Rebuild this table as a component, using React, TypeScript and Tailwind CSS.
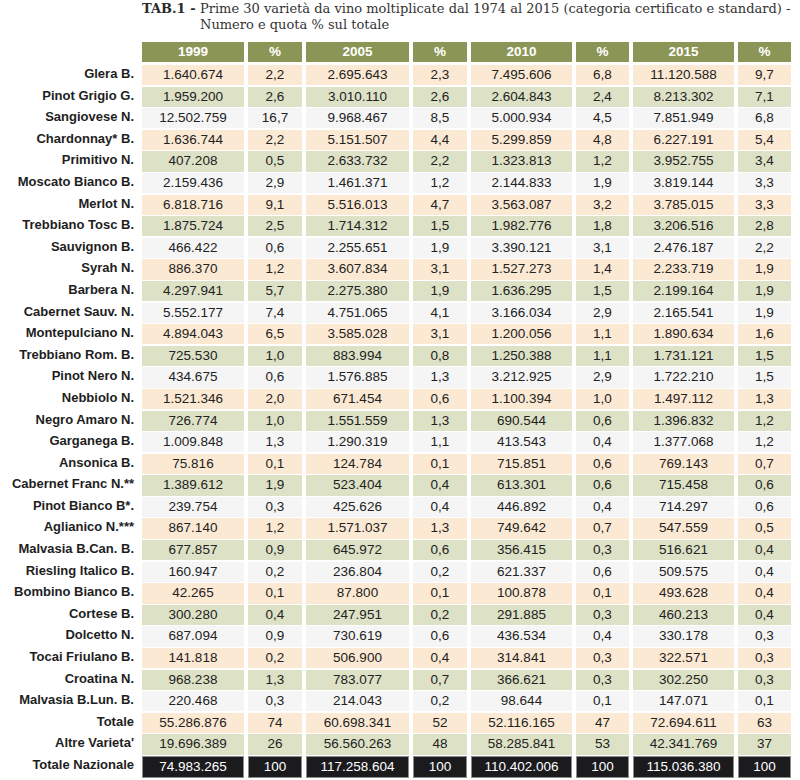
const ROWS: [string, string, string, string, string, string, string, string, string][] = [
  ['Glera B.', '1.640.674', '2,2', '2.695.643', '2,3', '7.495.606', '6,8', '11.120.588', '9,7'],
  ['Pinot Grigio G.', '1.959.200', '2,6', '3.010.110', '2,6', '2.604.843', '2,4', '8.213.302', '7,1'],
  ['Sangiovese N.', '12.502.759', '16,7', '9.968.467', '8,5', '5.000.934', '4,5', '7.851.949', '6,8'],
  ['Chardonnay* B.', '1.636.744', '2,2', '5.151.507', '4,4', '5.299.859', '4,8', '6.227.191', '5,4'],
  ['Primitivo N.', '407.208', '0,5', '2.633.732', '2,2', '1.323.813', '1,2', '3.952.755', '3,4'],
  ['Moscato Bianco B.', '2.159.436', '2,9', '1.461.371', '1,2', '2.144.833', '1,9', '3.819.144', '3,3'],
  ['Merlot N.', '6.818.716', '9,1', '5.516.013', '4,7', '3.563.087', '3,2', '3.785.015', '3,3'],
  ['Trebbiano Tosc B.', '1.875.724', '2,5', '1.714.312', '1,5', '1.982.776', '1,8', '3.206.516', '2,8'],
  ['Sauvignon B.', '466.422', '0,6', '2.255.651', '1,9', '3.390.121', '3,1', '2.476.187', '2,2'],
  ['Syrah N.', '886.370', '1,2', '3.607.834', '3,1', '1.527.273', '1,4', '2.233.719', '1,9'],
  ['Barbera N.', '4.297.941', '5,7', '2.275.380', '1,9', '1.636.295', '1,5', '2.199.164', '1,9'],
  ['Cabernet Sauv. N.', '5.552.177', '7,4', '4.751.065', '4,1', '3.166.034', '2,9', '2.165.541', '1,9'],
  ['Montepulciano N.', '4.894.043', '6,5', '3.585.028', '3,1', '1.200.056', '1,1', '1.890.634', '1,6'],
  ['Trebbiano Rom. B.', '725.530', '1,0', '883.994', '0,8', '1.250.388', '1,1', '1.731.121', '1,5'],
  ['Pinot Nero N.', '434.675', '0,6', '1.576.885', '1,3', '3.212.925', '2,9', '1.722.210', '1,5'],
  ['Nebbiolo N.', '1.521.346', '2,0', '671.454', '0,6', '1.100.394', '1,0', '1.497.112', '1,3'],
  ['Negro Amaro N.', '726.774', '1,0', '1.551.559', '1,3', '690.544', '0,6', '1.396.832', '1,2'],
  ['Garganega B.', '1.009.848', '1,3', '1.290.319', '1,1', '413.543', '0,4', '1.377.068', '1,2'],
  ['Ansonica B.', '75.816', '0,1', '124.784', '0,1', '715.851', '0,6', '769.143', '0,7'],
  ['Cabernet Franc N.**', '1.389.612', '1,9', '523.404', '0,4', '613.301', '0,6', '715.458', '0,6'],
  ['Pinot Bianco B*.', '239.754', '0,3', '425.626', '0,4', '446.892', '0,4', '714.297', '0,6'],
  ['Aglianico N.***', '867.140', '1,2', '1.571.037', '1,3', '749.642', '0,7', '547.559', '0,5'],
  ['Malvasia B.Can. B.', '677.857', '0,9', '645.972', '0,6', '356.415', '0,3', '516.621', '0,4'],
  ['Riesling Italico B.', '160.947', '0,2', '236.804', '0,2', '621.337', '0,6', '509.575', '0,4'],
  ['Bombino Bianco B.', '42.265', '0,1', '87.800', '0,1', '100.878', '0,1', '493.628', '0,4'],
  ['Cortese B.', '300.280', '0,4', '247.951', '0,2', '291.885', '0,3', '460.213', '0,4'],
  ['Dolcetto N.', '687.094', '0,9', '730.619', '0,6', '436.534', '0,4', '330.178', '0,3'],
  ['Tocai Friulano B.', '141.818', '0,2', '506.900', '0,4', '314.841', '0,3', '322.571', '0,3'],
  ['Croatina N.', '968.238', '1,3', '783.077', '0,7', '366.621', '0,3', '302.250', '0,3'],
  ['Malvasia B.Lun. B.', '220.468', '0,3', '214.043', '0,2', '98.644', '0,1', '147.071', '0,1'],
  ['Totale', '55.286.876', '74', '60.698.341', '52', '52.116.165', '47', '72.694.611', '63'],
  ["Altre Varieta'", '19.696.389', '26', '56.560.263', '48', '58.285.841', '53', '42.341.769', '37'],
];

const TOTAL = ['Totale Nazionale', '74.983.265', '100', '117.258.604', '100', '110.402.006', '100', '115.036.380', '100'];

const HEAD = ['1999', '%', '2005', '%', '2010', '%', '2015', '%'];

// peach / sage / light grey, repeating
const STRIPES = ['bg-[#fce9d3]', 'bg-[#dde1c6]', 'bg-[#f5f5f5]'];

const GRID = 'grid grid-cols-[138px_102px_54px_103px_54px_101px_53px_101px_53px] gap-x-[4px]';

export default function App() {
  return (
    <div className="w-[800px] h-[780px] bg-white overflow-hidden font-['Liberation_Sans',Arial,sans-serif] text-[#222]">
      {/* Title */}
      <div className="flex pl-[142px] pt-[1px] h-[42px] font-['DejaVu_Serif',serif] text-[13px] leading-[16px] text-[#333]">
        <span className="font-bold w-[58px] shrink-0 text-[#2a2a2a]">TAB.1 -</span>
        <p className="whitespace-nowrap">
          Prime 30 varietà da vino moltiplicate dal 1974 al 2015 (categoria certificato e standard) -
          <br />
          Numero e quota % sul totale
        </p>
      </div>

      <div className="flex flex-col gap-y-[4px]">
        {/* Header row */}
        <div className={`${GRID} h-[19px]`}>
          <div />
          {HEAD.map((h, i) => (
            <div key={i} className="bg-[#8b9556] text-white font-bold text-[13.5px] flex items-center justify-center">
              {h}
            </div>
          ))}
        </div>

        {ROWS.map((row, r) => (
          <div key={row[0]} className={`${GRID} h-[17.6px]`}>
            <div className="pr-[4px] text-right font-bold text-[13px] leading-[17.6px] whitespace-nowrap text-[#1e1e1e]">
              {row[0]}
            </div>
            {row.slice(1).map((v, c) => (
              <div key={c} className={`${STRIPES[r % 3]} text-[13.5px] flex items-center justify-center`}>
                {v}
              </div>
            ))}
          </div>
        ))}

        <div className={`${GRID} h-[17.6px]`}>
          <div className="pr-[4px] text-right font-bold text-[13px] leading-[17.6px] whitespace-nowrap text-[#1e1e1e]">
            {TOTAL[0]}
          </div>
          {TOTAL.slice(1).map((v, c) => (
            <div key={c} className="bg-[#1b1b1e] border border-[#8c8c8c] text-white text-[13.5px] flex items-center justify-center">
              {v}
            </div>
          ))}
        </div>
      </div>
    </div>
  );
}
